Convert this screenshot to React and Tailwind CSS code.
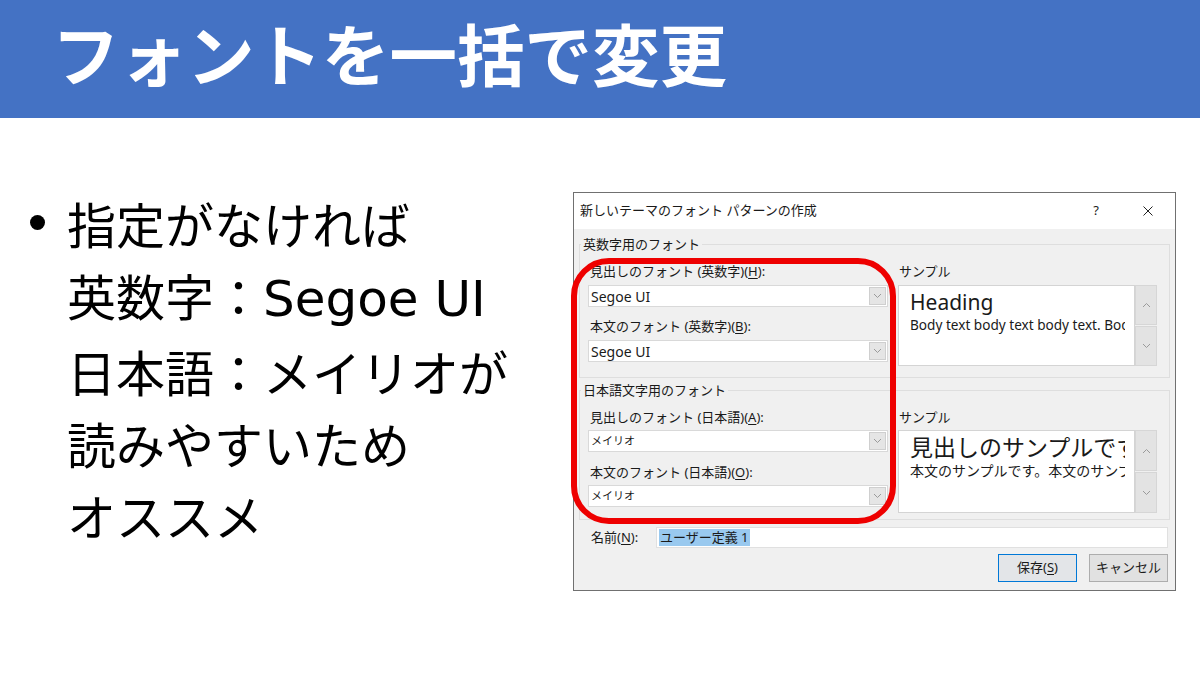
import React from "react";

const jp = "font-['Noto_Sans','Noto_Sans_CJK_JP',sans-serif]";

const Down = () => (
  <svg width="9" height="6" viewBox="0 0 9 6" fill="none">
    <path d="M1 1 L4.5 4.5 L8 1" stroke="#9a9a9a" strokeWidth="1" />
  </svg>
);

const Up = () => (
  <svg width="9" height="6" viewBox="0 0 9 6" fill="none">
    <path d="M1 5 L4.5 1.5 L8 5" stroke="#9a9a9a" strokeWidth="1" />
  </svg>
);

// underlined accelerator key
const K = ({ children }) => <span className="underline underline-offset-2">{children}</span>;

const Combo = ({ value, small }) => (
  <div className="h-[22px] flex bg-white border border-[#d9d9d9]">
    <div
      className={`flex-1 flex items-center pl-[2px] text-[#1a1a1a] ${
        small ? "text-[11px]" : "text-[14px]"
      }`}
    >
      {value}
    </div>
    <div className="w-[17px] m-[1px] bg-[#e5e5e5] border border-[#cfcfcf] flex items-center justify-center">
      <Down />
    </div>
  </div>
);

const Scroll = () => (
  <div className="w-[22px] shrink-0 flex flex-col gap-[1px] bg-[#f0f0f0]">
    <div className="flex-1 flex items-center justify-center bg-[#e3e3e3] border border-[#d6d6d6]">
      <Up />
    </div>
    <div className="flex-1 flex items-center justify-center bg-[#e3e3e3] border border-[#d6d6d6]">
      <Down />
    </div>
  </div>
);

const Group = ({ title, className, children }) => (
  <div className={`mx-[5px] border border-[#dedede] ${className}`}>
    <div className="-mt-[10px] ml-[1px] w-fit px-[2px] bg-[#f0f0f0] text-[13px] leading-[19px]">
      {title}
    </div>
    {children}
  </div>
);

const Dialog = () => (
  <div className={`relative w-[603px] h-[399px] bg-[#f0f0f0] border border-[#707070] text-[#1a1a1a] ${jp}`}>
    {/* Title bar */}
    <div className="h-[36px] bg-white flex items-center pl-[6px] text-[13px]">
      <span className="flex-1">新しいテーマのフォント パターンの作成</span>
      <span className="w-[20px] text-center">?</span>
      <span className="ml-[37px] mr-[22px] flex">
        <svg width="10" height="10" viewBox="0 0 10 10">
          <path d="M0.5 0.5 L9.5 9.5 M9.5 0.5 L0.5 9.5" stroke="#222" strokeWidth="1" />
        </svg>
      </span>
    </div>

    {/* Body */}
    <div className="pt-[15px]">
      {/* Latin fonts */}
      <Group title="英数字用のフォント" className="pb-[11px]">
        <div className="flex pl-[8px] pr-[12px] mt-[8px]">
          <div className="w-[300px] shrink-0">
            <div className="text-[13px] leading-[18px] pl-[2px]">
              見出しのフォント (英数字)(<K>H</K>):
            </div>
            <div className="mt-[5px]">
              <Combo value="Segoe UI" />
            </div>
            <div className="text-[13px] leading-[18px] pl-[2px] mt-[10px]">
              本文のフォント (英数字)(<K>B</K>):
            </div>
            <div className="mt-[5px]">
              <Combo value="Segoe UI" />
            </div>
          </div>
          <div className="flex-1 min-w-0 ml-[10px]">
            <div className="text-[13px] leading-[18px] pl-[1px]">サンプル</div>
            <div className="mt-[5px] h-[81px] flex">
              <div className="flex-1 min-w-0 bg-white border border-[#d4d4d4] pl-[11px] pr-[9px] pt-[2px]">
                <div className="overflow-hidden whitespace-nowrap">
                  <div className="text-[21px] leading-[28px]">Heading</div>
                  <div className="text-[13.6px] leading-[18px]">Body text body text body text. Body text</div>
                </div>
              </div>
              <Scroll />
            </div>
          </div>
        </div>
      </Group>

      {/* Japanese fonts */}
      <Group title="日本語文字用のフォント" className="mt-[12px] pb-[6px]">
        <div className="flex pl-[8px] pr-[12px] mt-[8px]">
          <div className="w-[300px] shrink-0">
            <div className="text-[13px] leading-[18px] pl-[2px]">
              見出しのフォント (日本語)(<K>A</K>):
            </div>
            <div className="mt-[4px]">
              <Combo value="メイリオ" small />
            </div>
            <div className="text-[13px] leading-[18px] pl-[2px] mt-[11px]">
              本文のフォント (日本語)(<K>O</K>):
            </div>
            <div className="mt-[4px]">
              <Combo value="メイリオ" small />
            </div>
          </div>
          <div className="flex-1 min-w-0 ml-[10px]">
            <div className="text-[13px] leading-[18px] pl-[1px]">サンプル</div>
            <div className="mt-[4px] h-[83px] flex">
              <div className="flex-1 min-w-0 bg-white border border-[#d4d4d4] pl-[11px] pr-[9px] pt-[1px]">
                <div className="overflow-hidden whitespace-nowrap">
                  <div className="text-[23px] leading-[30px]">見出しのサンプルです。</div>
                  <div className="text-[14px] leading-[18px]">本文のサンプルです。本文のサンプルです。</div>
                </div>
              </div>
              <Scroll />
            </div>
          </div>
        </div>
      </Group>

      {/* Name */}
      <div className="mt-[7px] flex items-center pl-[17px] pr-[7px] text-[13px]">
        <span className="w-[65px]">
          名前(<K>N</K>):
        </span>
        <div className="flex-1 h-[21px] bg-white border border-[#e0e0e0] flex items-center pl-[2px]">
          <span className="bg-[#99c9ef] px-[1px] leading-[17px]">ユーザー定義 1</span>
        </div>
      </div>

      {/* Buttons */}
      <div className="mt-[6px] flex justify-end gap-[12px] pr-[7px] text-[13px]">
        <div className="w-[79px] h-[28px] bg-[#e3e5e8] border border-[#0078d7] flex items-center justify-center">
          保存(<K>S</K>)
        </div>
        <div className="w-[79px] h-[28px] bg-[#e1e1e1] border border-[#adadad] flex items-center justify-center">
          キャンセル
        </div>
      </div>
    </div>

    {/* Red highlight */}
    <div className="absolute left-[-3px] top-[65px] w-[325px] h-[266px] border-[6px] border-[#ee0000] rounded-[38px] pointer-events-none" />
  </div>
);

const App = () => {
  return (
    <div className="w-[1200px] h-[675px] bg-white overflow-hidden">
      {/* Header */}
      <div className="h-[118px] bg-[#4472c4] flex items-center pl-[52px] pb-[14px]">
        <h1 className="text-white text-[67.5px] font-bold leading-none font-['Noto_Sans_CJK_JP',sans-serif]">
          フォントを一括で変更
        </h1>
      </div>

      <div className="flex items-start">
        {/* Bullet text */}
        <div className="w-[573px] shrink-0 pl-[30px] pt-[69px] flex text-black font-['Noto_Sans_CJK_JP',sans-serif] text-[49px] leading-[72px]">
          <div className="w-[37px] shrink-0">
            <div className="mt-[28px] w-[15px] h-[15px] rounded-full bg-black" />
          </div>
          <div className="whitespace-nowrap">
            <p>指定がなければ</p>
            <p>
              英数字：<span className="font-['DejaVu_Sans',sans-serif] text-[50px]">Segoe UI</span>
            </p>
            <p>日本語：メイリオが</p>
            <p>読みやすいため</p>
            <p>オススメ</p>
          </div>
        </div>

        {/* Dialog */}
        <div className="mt-[74px]">
          <Dialog />
        </div>
      </div>
    </div>
  );
};

export default App;
